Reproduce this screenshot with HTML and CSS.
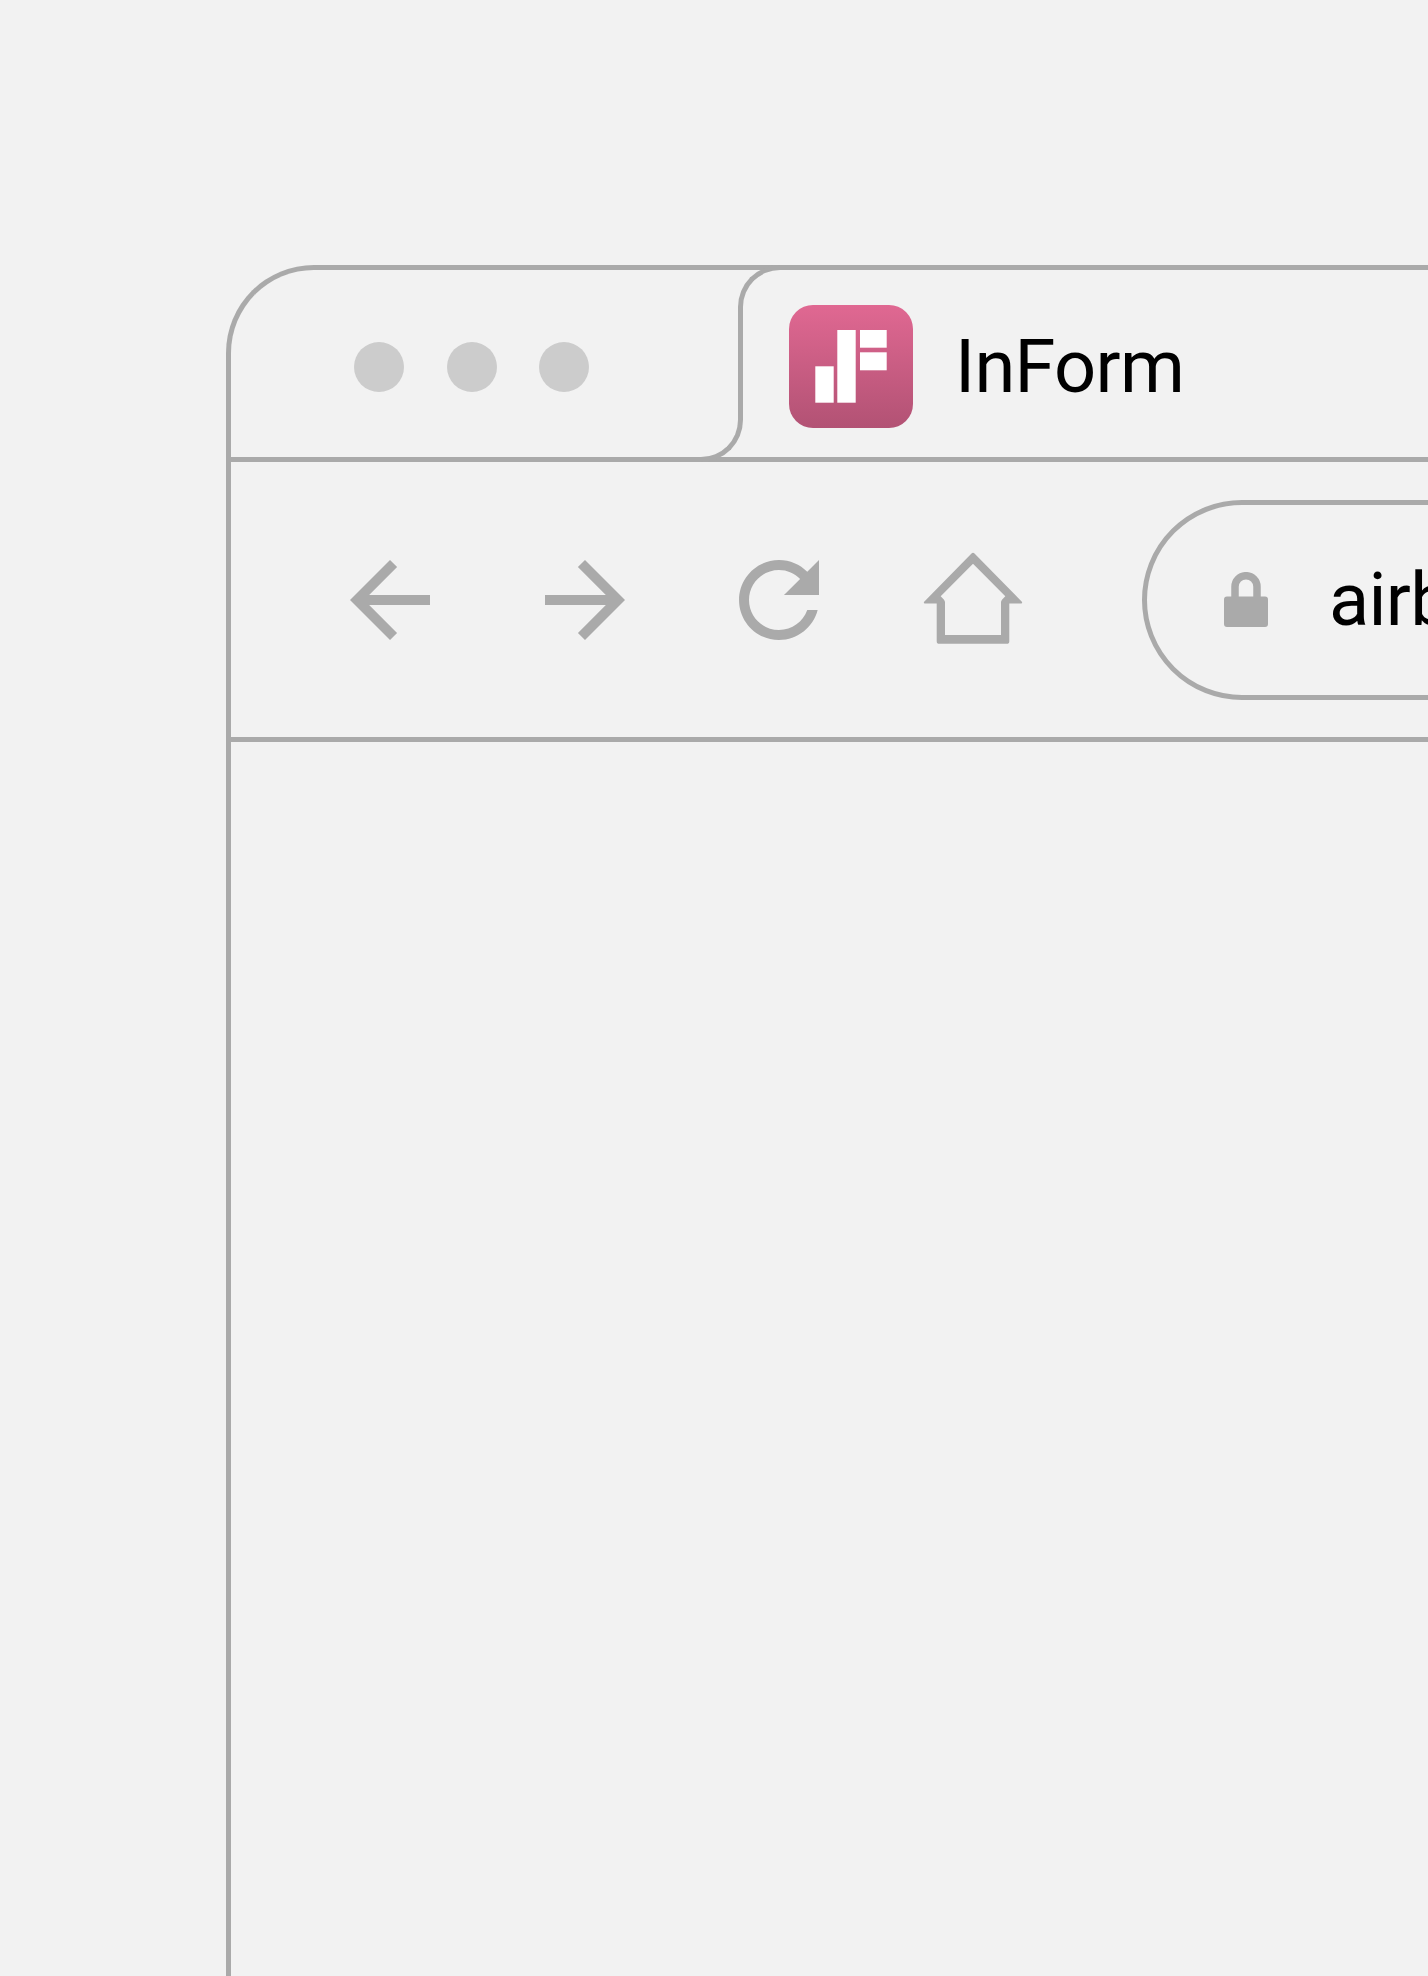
FILE: index.html
```html
<!DOCTYPE html>
<html lang="en">
<head>
  <meta charset="UTF-8">
  <title>InForm</title>
  <link rel="stylesheet" href="styles.css">
</head>

<body>

  <div class="browser-window">

    <div class="title-bar">
      <div class="window-controls">
        <span class="dot"></span>
        <span class="dot"></span>
        <span class="dot"></span>
      </div>

      <div class="tab">
        <svg class="app-logo" viewBox="0 0 124 123">
          <defs>
            <linearGradient id="logoFill" x1="0" y1="0" x2="0" y2="1">
              <stop offset="0" stop-color="#e06892"/>
              <stop offset="1" stop-color="#b25274"/>
            </linearGradient>
          </defs>
          <rect width="124" height="123" rx="24" fill="url(#logoFill)"/>
          <rect x="26.3" y="61.3" width="18.4" height="36.4" fill="#fff"/>
          <rect x="48.3" y="25" width="18.4" height="72.7" fill="#fff"/>
          <rect x="71" y="25" width="26.7" height="17.7" fill="#fff"/>
          <rect x="71" y="47.3" width="26.7" height="18" fill="#fff"/>
        </svg>
        <span class="tab-title">InForm</span>
      </div>
    </div>

    <div class="toolbar">
      <svg class="nav-icon" viewBox="0 0 24 24"><path d="M20 11H7.83l5.59-5.59L12 4l-8 8 8 8 1.41-1.41L7.83 13H20v-2z"/></svg>
      <svg class="nav-icon" viewBox="0 0 24 24"><path d="M4 11h12.17l-5.59-5.59L12 4l8 8-8 8-1.41-1.41L16.17 13H4v-2z"/></svg>
      <svg class="nav-icon" viewBox="0 0 24 24"><path d="M17.65 6.35C16.2 4.9 14.21 4 12 4c-4.42 0-7.99 3.58-7.99 8s3.57 8 7.99 8c3.73 0 6.84-2.55 7.73-6h-2.08c-.82 2.33-3.04 4-5.65 4-3.31 0-6-2.69-6-6s2.69-6 6-6c1.66 0 3.14.69 4.22 1.78L13 11h7V4l-2.35 2.35z"/></svg>
      <svg class="home-icon" viewBox="0 0 100 96"><path fill-rule="evenodd" d="M48.5 1.6a2 2 0 0 1 3 0L98.6 49.4c1 1 .6 2.1-.8 2.1H86.3v37.7a2.6 2.6 0 0 1-2.6 2.6H16.3a2.6 2.6 0 0 1-2.6-2.6V51.5H2.2c-1.4 0-1.8-1.1-.8-2.1L48.5 1.6zM50 11.7 17.7 44.3l2.6 2.6c1.1 1.1 1.7 2.2 1.7 3.4V83H78V50.3c0-1.2.6-2.3 1.7-3.4l2.6-2.6L50 11.7z"/></svg>

      <div class="address-bar">
        <svg class="lock-icon" viewBox="0 0 44 55">
          <path class="shackle" d="M11 27V14.7a11 11 0 0 1 22 0V27"/>
          <rect y="24.5" width="44" height="30.5" rx="3"/>
        </svg>
        <span class="url">airbnb.com</span>
      </div>
    </div>

  </div>

</body>
</html>
```

FILE: styles.css
```css
html, body {
  height: 100%;
  overflow: hidden;
}

body {
  margin: 0;
  padding: 265px 0 0 226px;
  box-sizing: border-box;
  font-family: Roboto, sans-serif;
  background-color: #f2f2f2;
  color: #000;
}

.browser-window {
  width: 2000px;
  height: 1800px;
  border-top: 5px solid #aaa;
  border-left: 5px solid #aaa;
  border-top-left-radius: 88px;
}

.title-bar {
  display: flex;
  height: 187px;
  border-bottom: 5px solid #aaa;
}

.window-controls {
  box-sizing: border-box;
  display: flex;
  align-items: center;
  flex-shrink: 0;
  gap: 42.7px;
  width: 512px;
  height: 152px;
  margin-top: 40px;
  padding: 0 0 34px 123px;
  border-right: 5px solid #aaa;
  border-bottom: 5px solid #aaa;
  border-bottom-right-radius: 42px;
}

.dot {
  width: 50px;
  height: 50px;
  flex-shrink: 0;
  border-radius: 50%;
  background-color: #ccc;
}

.tab {
  position: relative;
  display: flex;
  align-items: center;
  flex: 1;
  padding: 6px 0 0 46px;
}

/* rounded corner where the tab leaves the top edge */
.tab::before {
  content: "";
  position: absolute;
  top: -5px;
  left: -5px;
  box-sizing: border-box;
  width: 47px;
  height: 47px;
  border-top: 5px solid #aaa;
  border-left: 5px solid #aaa;
  border-top-left-radius: 42px;
}

.app-logo {
  width: 124px;
  height: 123px;
  flex-shrink: 0;
}

.tab-title {
  margin-left: 42px;
  font-size: 74px;
  letter-spacing: -0.7px;
  line-height: 1;
}

.toolbar {
  display: flex;
  align-items: center;
  height: 275px;
  padding-left: 99px;
  border-bottom: 5px solid #aaa;
}

.nav-icon {
  width: 120px;
  height: 120px;
  margin-right: 74.5px;
  flex-shrink: 0;
  fill: #aaa;
}

.nav-icon:nth-child(3) {
  margin-right: 84px;
}

.home-icon {
  width: 100px;
  height: 96px;
  flex-shrink: 0;
  fill: #aaa;
}

.address-bar {
  box-sizing: border-box;
  display: flex;
  align-items: center;
  flex: 1;
  height: 200px;
  margin-left: 119px;
  padding-left: 77px;
  border: 5px solid #aaa;
  border-radius: 100px;
}

.lock-icon {
  width: 44px;
  height: 55px;
  flex-shrink: 0;
  fill: #aaa;
}

.shackle {
  fill: none;
  stroke: #aaa;
  stroke-width: 7.5;
}

.url {
  margin-left: 61px;
  font-size: 74px;
  letter-spacing: -0.7px;
  line-height: 1;
}
```
